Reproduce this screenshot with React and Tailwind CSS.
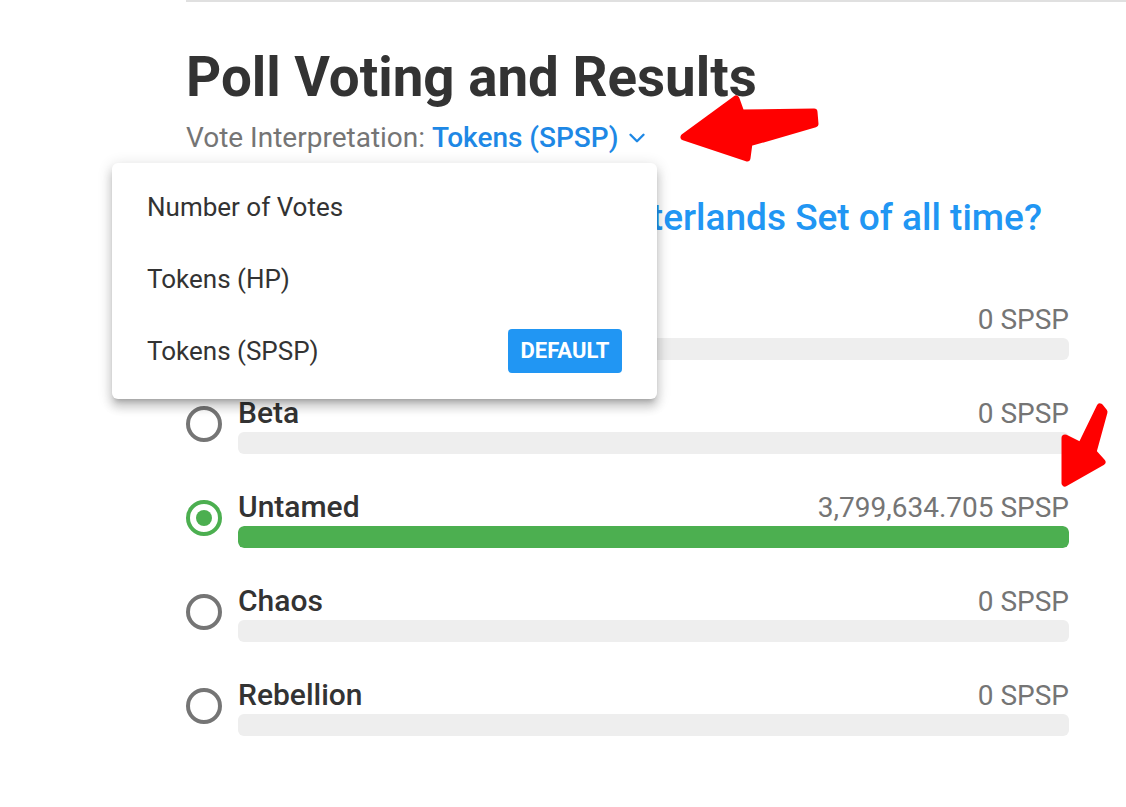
import { ChevronDown } from 'lucide-react';

const options = [
  { name: 'Alpha', value: '0 SPSP', pct: 0 },
  { name: 'Beta', value: '0 SPSP', pct: 0 },
  { name: 'Untamed', value: '3,799,634.705 SPSP', pct: 100, selected: true },
  { name: 'Chaos', value: '0 SPSP', pct: 0 },
  { name: 'Rebellion', value: '0 SPSP', pct: 0 },
];

const modes = ['Number of Votes', 'Tokens (HP)', 'Tokens (SPSP)'];

function Radio({ selected }) {
  if (selected) {
    return (
      <div className="flex h-9 w-9 shrink-0 items-center justify-center rounded-full border-4 border-[#4caf50]">
        <div className="h-4 w-4 rounded-full bg-[#4caf50]" />
      </div>
    );
  }
  return <div className="h-9 w-9 shrink-0 rounded-full border-4 border-[#757575]" />;
}

function OptionRow({ option }) {
  return (
    <div className="flex items-center gap-4">
      <Radio selected={option.selected} />
      <div className="flex-1">
        <div className="flex h-[38px] items-baseline justify-between leading-[38px]">
          <span className="text-[30px] font-medium text-[#333]">{option.name}</span>
          <span className="text-[28px] text-[#757575]">{option.value}</span>
        </div>
        <div className="h-[22px] overflow-hidden rounded-md bg-[#eeeeee]">
          {option.pct > 0 ? (
            <div className="h-full rounded-md bg-[#4caf50]" style={{ width: option.pct + '%' }} />
          ) : null}
        </div>
      </div>
    </div>
  );
}

function ModeMenu() {
  return (
    <div className="absolute left-[-74px] top-[43px] z-10 w-[545px] rounded-md bg-white pb-3 pt-2 shadow-[0_5px_5px_-3px_rgba(0,0,0,0.2),0_8px_10px_1px_rgba(0,0,0,0.14),0_3px_14px_2px_rgba(0,0,0,0.12)]">
      {modes.map(function (mode) {
        return (
          <div key={mode} className="flex h-[72px] items-center justify-between px-[35px]">
            <span className="text-[26px] text-[#333]">{mode}</span>
            {mode === 'Tokens (SPSP)' ? (
              <span className="flex h-[44px] w-[114px] items-center justify-center rounded bg-[#2196f3] text-[22px] font-bold text-white">
                DEFAULT
              </span>
            ) : null}
          </div>
        );
      })}
    </div>
  );
}

function Arrows() {
  return (
    <svg className="pointer-events-none absolute left-0 top-0 z-20" width="1126" height="807" viewBox="0 0 1126 807">
      <polygon
        points="684,137 736,99 741,113 814,112 815,124 749,143 747,158"
        fill="#ff0000"
        stroke="#ff0000"
        strokeWidth="7"
        strokeLinejoin="round"
      />
      <polygon
        points="1100,407 1104,412 1093,452 1102,462 1065,483 1065,438 1081,446"
        fill="#ff0000"
        stroke="#ff0000"
        strokeWidth="7"
        strokeLinejoin="round"
      />
    </svg>
  );
}

export default function App() {
  return (
    <div className="relative h-[807px] overflow-hidden bg-white font-['Roboto',sans-serif]">
      <div className="ml-[186px] border-t-2 border-[#e0e0e0]">
        <div className="w-[883px]">
          <h1 className="mt-[42px] text-[54.7px] font-bold leading-[66px] text-[#333]">Poll Voting and Results</h1>
          <div className="relative mt-[10px] flex items-center text-[28px] leading-[36px]">
            <span className="text-[#757575]">Vote Interpretation:&nbsp;</span>
            <span className="font-medium text-[#1e88e5]">Tokens (SPSP)</span>
            <ChevronDown className="ml-[6px] text-[#1e88e5]" size={26} strokeWidth={2.2} />
            <ModeMenu />
          </div>
          <h2 className="ml-3 mt-[39px] whitespace-nowrap text-[37px] font-medium leading-[46px] text-[#2196f3]">
            What is your favourite Splinterlands Set of all time?
          </h2>
          <div className="mt-[59px] flex flex-col gap-[34px]">
            {options.map(function (option) {
              return <OptionRow key={option.name} option={option} />;
            })}
          </div>
        </div>
      </div>
      <Arrows />
    </div>
  );
}
